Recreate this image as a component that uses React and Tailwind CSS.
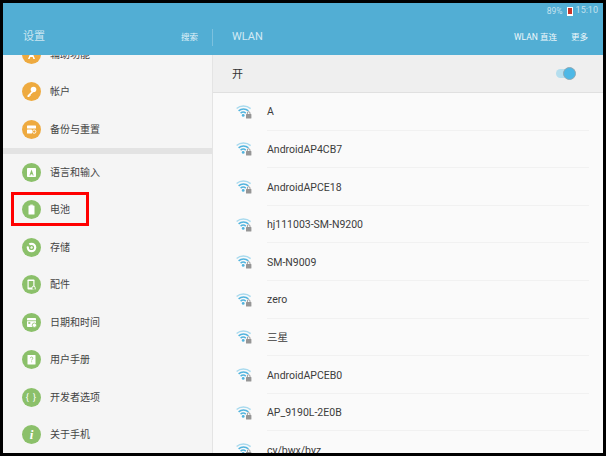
import React from "react";

// Settings > WLAN tablet screen

const CJK = "font-['Roboto','Noto_Sans_CJK_SC',sans-serif]";

const Wifi = () => (
  <svg width="16" height="14" viewBox="0 0 16 14" fill="none">
    <path d="M0.6 3.6C4.4 0.2 10.4 0.2 14.6 3.6" stroke="#a9daee" strokeWidth="1.4" />
    <path d="M2.6 5.9C5.4 3.5 9.6 3.5 12.4 5.9" stroke="#52b4de" strokeWidth="1.5" />
    <path d="M4.6 8.1C6.2 6.8 8.2 6.8 9.8 8.1" stroke="#52b4de" strokeWidth="1.5" />
    <circle cx="7.2" cy="10.4" r="1.4" fill="#52b4de" />
    <rect x="10" y="9" width="5.4" height="4.6" rx="0.5" fill="#969696" />
    <path d="M11.4 9.2V8C11.4 6.2 14 6.2 14 8V9.2" stroke="#969696" strokeWidth="0.9" />
  </svg>
);

const icons = {
  access: <path d="M9.5 5.5L6 14h1.6l.7-2h2.4l.7 2H13L9.5 5.5z" fill="#fff" />,
  key: (
    <>
      <circle cx="11.5" cy="7.5" r="2.8" fill="#fff" />
      <path d="M10 9L5.5 13.5V15h2v-1.2h1.2v-1.3L11 10.5" fill="#fff" />
    </>
  ),
  backup: (
    <>
      <rect x="5" y="5.5" width="9" height="3" rx="0.6" fill="#fff" />
      <rect x="5" y="9.5" width="5" height="4" rx="0.6" fill="#fff" />
      <circle cx="12.2" cy="11.6" r="1.7" stroke="#fff" strokeWidth="0.9" fill="none" />
    </>
  ),
  lang: (
    <>
      <rect x="5" y="5" width="9" height="9" rx="0.8" fill="#fff" />
      <path d="M9.5 6.6L7.4 12.4h1l.4-1.2h1.5l.4 1.2h1L9.5 6.6z" fill="#8bc06a" />
    </>
  ),
  battery: (
    <>
      <rect x="6.5" y="5.5" width="6" height="9" rx="0.6" fill="#fff" />
      <rect x="8.2" y="4.6" width="2.6" height="1.2" fill="#fff" />
    </>
  ),
  storage: (
    <>
      <circle cx="9.5" cy="9.5" r="4.8" fill="#fff" />
      <circle cx="9.5" cy="9.5" r="2.6" fill="#8bc06a" />
      <circle cx="9.5" cy="9.5" r="1.2" fill="#fff" />
      <path d="M9.5 9.5L6 4.5H4.5V8z" fill="#8bc06a" />
    </>
  ),
  parts: (
    <>
      <rect x="5.5" y="4.5" width="7" height="10" rx="0.8" fill="#fff" />
      <rect x="6.7" y="6" width="4.6" height="6.5" fill="#8bc06a" />
      <path d="M10 14.4v-1.6a1.6 1.6 0 0 1 3.2 0v1.6" stroke="#fff" strokeWidth="1" fill="#8bc06a" />
    </>
  ),
  date: (
    <>
      <rect x="5" y="5" width="9" height="9" rx="0.8" fill="#fff" />
      <rect x="5" y="7.4" width="9" height="0.8" fill="#8bc06a" />
      <rect x="6.3" y="9.2" width="2" height="1.6" fill="#8bc06a" />
      <circle cx="12.4" cy="12.2" r="2.2" fill="#fff" stroke="#8bc06a" strokeWidth="0.8" />
    </>
  ),
  manual: (
    <>
      <rect x="5.5" y="5" width="8" height="9.5" rx="0.6" fill="#fff" />
      <path d="M8.3 8.2c0-1.6 2.6-1.6 2.6 0 0 1-1.3 1-1.3 2.2M9.6 11.4v.9" stroke="#8bc06a" strokeWidth="0.8" fill="none" />
    </>
  ),
};

const GlyphIcon = ({ color, name, glyph }) => (
  <div className={`w-[19px] h-[19px] rounded-full shrink-0 flex items-center justify-center text-white ${color}`}>
    {glyph ? (
      glyph
    ) : (
      <svg width="19" height="19" viewBox="0 0 19 19">
        {icons[name]}
      </svg>
    )}
  </div>
);

const ORANGE = "bg-[#eeaa3f]";
const GREEN = "bg-[#8bc06a]";

const Row = ({ color, name, glyph, label }) => (
  <div className="h-[37.5px] shrink-0 flex items-center pl-[19px] gap-[9px]">
    <GlyphIcon color={color} name={name} glyph={glyph} />
    <span className="text-[10px] text-[#444]">{label}</span>
  </div>
);

const networks = [
  "A",
  "AndroidAP4CB7",
  "AndroidAPCE18",
  "hj111003-SM-N9200",
  "SM-N9009",
  "zero",
  "三星",
  "AndroidAPCEB0",
  "AP_9190L-2E0B",
  "cy/bwx/byz",
];

export default function App() {
  return (
    <div className={`w-[606px] h-[456px] bg-black p-[3px] ${CJK}`}>
      <div className="w-[600px] h-[450px] flex flex-col overflow-hidden relative bg-[#fafafa]">
        {/* header */}
        <div className="h-[52px] shrink-0 bg-[#52aed4] flex flex-col">
          <div className="h-[16px] flex items-center justify-end pr-[5px] text-[8.5px] text-[#c3e2ef]">
            <span>89%</span>
            <span className="ml-[4px] w-[6px] h-[9px] bg-white flex items-center justify-center">
              <span className="w-[4px] h-[6px] bg-[#c8352a]" />
            </span>
            <span className="ml-[3px] text-[9px]">15:10</span>
          </div>
          <div className="flex-1 flex items-center pt-[1px]">
            <div className="w-[210px] h-[17px] flex items-center justify-between pl-[20px] pr-[14px] border-r border-[#7cc1de]">
              <span className="text-[11px] text-[#cbe6f1]">设置</span>
              <span className="text-[8.5px] text-[#e2f2f8]">搜索</span>
            </div>
            <span className="ml-[19px] text-[11px] text-[#d3eaf4]">WLAN</span>
            <div className="ml-auto flex items-center gap-[14px] pr-[15px] text-[8.5px] text-[#f0f8fb]">
              <span>WLAN 直连</span>
              <span>更多</span>
            </div>
          </div>
        </div>

        <div className="flex-1 flex min-h-0">
          {/* left pane */}
          <div className="w-[210px] shrink-0 bg-[#f5f5f5] border-r border-[#e4e4e4] overflow-hidden flex flex-col">
            <div className="-mt-[19.5px] flex flex-col">
              <Row color={ORANGE} name="access" label="辅助功能" />
              <Row color={ORANGE} name="key" label="帐户" />
              <Row color={ORANGE} name="backup" label="备份与重置" />
              <div className="h-[5.5px] shrink-0 bg-[#e3e3e3]" />
              <Row color={GREEN} name="lang" label="语言和输入" />
              <Row color={GREEN} name="battery" label="电池" />
              <Row color={GREEN} name="storage" label="存储" />
              <Row color={GREEN} name="parts" label="配件" />
              <Row color={GREEN} name="date" label="日期和时间" />
              <Row color={GREEN} name="manual" label="用户手册" />
              <Row
                color={GREEN}
                glyph={<span className="text-[9px] leading-none tracking-[1px]">{"{ }"}</span>}
                label="开发者选项"
              />
              <Row
                color={GREEN}
                glyph={<span className="text-[13px] font-bold italic leading-none font-['Liberation_Serif',serif]">i</span>}
                label="关于手机"
              />
            </div>
          </div>

          {/* right pane */}
          <div className="flex-1 min-w-0 flex flex-col overflow-hidden">
            <div className="h-[38px] shrink-0 bg-[#efefef] border-b border-[#e0e0e0] flex items-center justify-between pl-[19px] pr-[27px]">
              <span className="text-[11px] text-[#333] pt-[4px]">开</span>
              <div className="w-[20px] h-[13px] relative flex items-center">
                <div className="w-[17px] h-[9px] rounded-full bg-[#b5deee]" />
                <div className="absolute right-0 top-0 w-[13px] h-[13px] rounded-full bg-[#4db8e6] border border-[#8fa9b5]" />
              </div>
            </div>
            <div className="flex flex-col">
              {networks.map((n) => (
                <div key={n} className="h-[37.6px] shrink-0 flex items-center pl-[23px]">
                  <Wifi />
                  <div className="ml-[15px] mr-[14px] flex-1 h-full flex items-center border-b border-[#f1f1f1]">
                    <span className="text-[10.5px] text-[#3c3c3c] pt-[2px]">{n}</span>
                  </div>
                </div>
              ))}
            </div>
          </div>
        </div>

        {/* annotation box over the battery row */}
        <div className="absolute left-[8px] top-[189px] w-[78px] h-[34px] border-[3px] border-[#f00]" />
      </div>
    </div>
  );
}
